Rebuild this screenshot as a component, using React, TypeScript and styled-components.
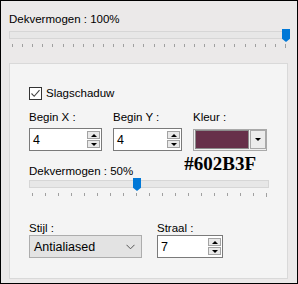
import React from 'react';
import styled, { createGlobalStyle } from 'styled-components';

const GlobalStyle = createGlobalStyle`
  html, body {
    margin: 0;
    padding: 0;
    background: #ffffff;
  }
  * {
    box-sizing: border-box;
  }
`;

const Window = styled.div`
  width: 298px;
  height: 284px;
  border: 1px solid #000;
  background: #ebe9e9;
  padding: 11px 8px 0 8px;
  font-family: 'Liberation Sans', Arial, sans-serif;
  font-size: 11.5px;
  color: #000;
  overflow: hidden;
`;

const Label = styled.div<{ $mb?: number }>`
  line-height: 14px;
  height: 14px;
  white-space: nowrap;
  margin-bottom: ${p => p.$mb ?? 0}px;
`;

const SliderBox = styled.div<{ $width: number; $mt: number }>`
  position: relative;
  width: ${p => p.$width}px;
  margin-top: ${p => p.$mt}px;
`;

const Track = styled.div`
  height: 8px;
  background: #e7e7e7;
  border: 1px solid #d6d6d6;
`;

const Thumb = styled.div<{ $left: number }>`
  position: absolute;
  top: -2px;
  left: ${p => p.$left}px;
  width: 8px;
  height: 13px;
  background: #0078d7;
  clip-path: polygon(0 0, 100% 0, 100% 75%, 50% 100%, 0 75%);
`;

const Ticks = styled.div<{ $pl: number; $pr: number }>`
  display: flex;
  justify-content: space-between;
  align-items: flex-start;
  margin-top: 5px;
  padding: 0 ${p => p.$pr}px 0 ${p => p.$pl}px;
  height: 4px;
`;

const Tick = styled.div<{ $long?: boolean }>`
  width: 1px;
  height: ${p => (p.$long ? 4 : 3)}px;
  background: #a0a0a0;
`;

const Group = styled.div`
  margin-top: 15px;
  width: 279px;
  height: 216px;
  border: 1px solid #d9d9d9;
  background: #f4f4f4;
  padding: 22px 18px 0 19px;
`;

const CheckRow = styled.label`
  display: flex;
  align-items: center;
  gap: 4px;
  height: 14px;
`;

const CheckBox = styled.span`
  width: 13px;
  height: 13px;
  border: 1px solid #333;
  background: #fff;
  display: flex;
  align-items: center;
  justify-content: center;
`;

const Row = styled.div<{ $mt: number; $gap: number }>`
  display: flex;
  gap: ${p => p.$gap}px;
  margin-top: ${p => p.$mt}px;
  align-items: flex-start;
`;

const Field = styled.div`
  display: flex;
  flex-direction: column;
`;

const SpinBox = styled.div<{ $width: number }>`
  width: ${p => p.$width}px;
  height: 23px;
  border: 1px solid #7a7a7a;
  background: #fff;
  display: flex;
  align-items: center;
  padding: 0 1px 0 3px;
`;

const SpinValue = styled.span`
  flex: 1;
  font-size: 12.5px;
  color: #000;
`;

const SpinButtons = styled.div`
  display: flex;
  flex-direction: column;
  gap: 1px;
`;

const SpinButton = styled.div`
  width: 13px;
  height: 8px;
  border: 1px solid #a3a3a3;
  background: #e9e9e9;
  display: flex;
  align-items: center;
  justify-content: center;
`;

const Arrow = styled.span<{ $up?: boolean }>`
  width: 0;
  height: 0;
  border-left: 3px solid transparent;
  border-right: 3px solid transparent;
  ${p => (p.$up ? 'border-bottom: 3px solid #000;' : 'border-top: 3px solid #000;')}
`;

const ColorPicker = styled.div`
  width: 74px;
  height: 22px;
  margin-top: 1px;
  border: 1px solid #a9a9a9;
  background: #f0f0f0;
  display: flex;
  gap: 1px;
  padding: 0 0 1px 1px;
`;

const Swatch = styled.div<{ $color: string }>`
  flex: 1;
  border: 1px solid #8c8c8c;
  background: ${p => p.$color};
`;

const ColorButton = styled.div`
  width: 16px;
  border: 1px solid #a9a9a9;
  background: #ececec;
  display: flex;
  align-items: center;
  justify-content: center;
`;

const HexRow = styled.div`
  display: flex;
  align-items: flex-start;
  margin-top: 3px;
  height: 24px;
`;

const HexLabel = styled(Label)`
  margin-top: 10px;
`;

const HexText = styled.div`
  margin-left: auto;
  margin-right: 13px;
  font-family: 'Liberation Serif', 'Times New Roman', serif;
  font-weight: bold;
  font-size: 19px;
  line-height: 19px;
  color: #000;
`;

const Select = styled.div`
  width: 113px;
  height: 23px;
  border: 1px solid #adadad;
  background: #e3e3e3;
  display: flex;
  align-items: center;
  padding: 0 6px 0 4px;
  font-size: 12.5px;
  color: #000;
`;

const SelectText = styled.span`
  flex: 1;
`;

const Slider: React.FC<{ width: number; mt: number; thumb: number; ticks: number; pl: number; pr: number }> = ({
  width,
  mt,
  thumb,
  ticks,
  pl,
  pr,
}) => (
  <SliderBox $width={width} $mt={mt}>
    <Track />
    <Thumb $left={thumb} />
    <Ticks $pl={pl} $pr={pr}>
      {Array.from({ length: ticks }).map((_, i) => (
        <Tick key={i} $long={i === ticks - 1} />
      ))}
    </Ticks>
  </SliderBox>
);

const Spin: React.FC<{ width: number; value: string }> = ({ width, value }) => (
  <SpinBox $width={width}>
    <SpinValue>{value}</SpinValue>
    <SpinButtons>
      <SpinButton>
        <Arrow $up />
      </SpinButton>
      <SpinButton>
        <Arrow />
      </SpinButton>
    </SpinButtons>
  </SpinBox>
);

export default function App() {
  return (
    <>
      <GlobalStyle />
      <Window>
        <Label>Dekvermogen : 100%</Label>
        <Slider width={280} mt={5} thumb={273} ticks={28} pl={3} pr={3} />

        <Group>
          <CheckRow>
            <CheckBox>
              <svg width="11" height="11" viewBox="0 0 11 11">
                <path d="M1.5 5.5 L4.2 8.3 L9.5 2.2" fill="none" stroke="#444" strokeWidth="1.1" />
              </svg>
            </CheckBox>
            Slagschaduw
          </CheckRow>

          <Row $mt={10} $gap={11}>
            <Field>
              <Label $mb={4}>Begin X :</Label>
              <Spin width={73} value="4" />
            </Field>
            <Field>
              <Label $mb={4}>Begin Y :</Label>
              <Spin width={69} value="4" />
            </Field>
            <Field>
              <Label $mb={4}>Kleur :</Label>
              <ColorPicker>
                <Swatch $color="#67304a" />
                <ColorButton>
                  <Arrow />
                </ColorButton>
              </ColorPicker>
            </Field>
          </Row>

          <HexRow>
            <HexLabel>Dekvermogen : 50%</HexLabel>
            <HexText>#602B3F</HexText>
          </HexRow>
          <Slider width={240} mt={2} thumb={104} ticks={19} pl={3} pr={2} />

          <Row $mt={24} $gap={15}>
            <Field>
              <Label>Stijl :</Label>
              <Select>
                <SelectText>Antialiased</SelectText>
                <svg width="9" height="6" viewBox="0 0 9 6">
                  <path d="M0.5 0.8 L4.5 4.8 L8.5 0.8" fill="none" stroke="#555" strokeWidth="1" />
                </svg>
              </Select>
            </Field>
            <Field>
              <Label>Straal :</Label>
              <Spin width={66} value="7" />
            </Field>
          </Row>
        </Group>
      </Window>
    </>
  );
}
